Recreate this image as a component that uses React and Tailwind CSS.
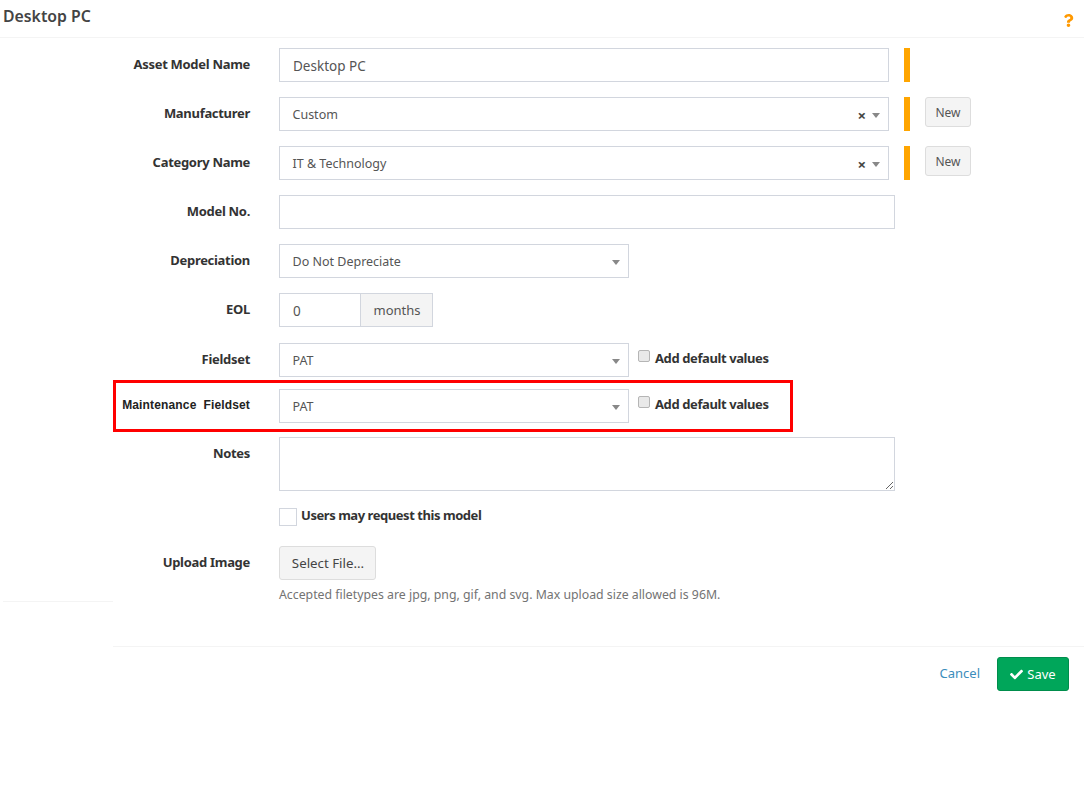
// Asset model edit form: flow layout with a red annotation box over the maintenance row.
import { FaCheck, FaQuestion } from 'react-icons/fa';

const field = 'h-[34px] border border-[#d2d6de] bg-white px-[13px] pt-[2px] text-[13.5px] text-[#555] outline-none';
const boldText = 'text-[13px] font-bold tracking-[-0.3px] text-[#333]';

function Row({ label, children, labelClass = boldText, gap = 'mb-[15px]' }) {
  return (
    <div className={`flex items-start ${gap}`}>
      <label className={`w-[137px] shrink-0 whitespace-nowrap pt-[6px] text-right leading-5 ${labelClass}`}>
        {label}
      </label>
      <div className="ml-[29px] flex min-w-0 items-start">{children}</div>
    </div>
  );
}

function Caret() {
  return <span className="h-0 w-0 border-x-[4px] border-t-[5px] border-x-transparent border-t-[#888]" />;
}

function Select({ value, width, clearable }) {
  return (
    <div className={`${field} ${width} flex items-center justify-between !pl-[12.5px] !pr-[8px] !text-[12.5px]`}>
      <span>{value}</span>
      <span className="flex items-center gap-[6px]">
        {clearable && <span className="text-[15px] font-bold leading-none text-[#444]">×</span>}
        <Caret />
      </span>
    </div>
  );
}

function RequiredBar() {
  return <span className="ml-[15px] h-[34px] w-[6px] bg-[#ffa500]" />;
}

function NewButton() {
  return (
    <button className="ml-[15px] h-[30px] w-[46px] rounded-[3px] border border-[#ddd] bg-[#f4f4f4] pt-[2px] text-[12px] text-[#555]">
      New
    </button>
  );
}

function DefaultValues() {
  return (
    <label className={`ml-[9px] flex h-[32px] items-center whitespace-nowrap ${boldText} !tracking-[-0.4px]`}>
      <input type="checkbox" className="mb-[6px] mr-[5px] h-[12px] w-[12px] appearance-none rounded-[2px] border border-[#b5b5b5] bg-[#e9e9e9]" />
      Add default values
    </label>
  );
}

export default function App() {
  return (
    <div className="min-h-[800px] bg-white font-['Noto_Sans','Open_Sans',sans-serif] text-[#333]">
      <header className="flex h-[38px] items-center justify-between border-b border-[#f4f4f4] pl-[3px] pr-[9px]">
        <h1 className="mb-[3px] text-[15.8px] font-semibold text-[#444]">Desktop PC</h1>
        <FaQuestion className="mt-[3px] text-[13px] text-[#ff9900]" />
      </header>

      <div className="flex">
        <div className="ml-[3px] h-[564px] w-[110px] shrink-0 border-b border-[#f4f4f4]" />

        <div className="min-w-0 flex-1">
          <form className="relative h-[609px] border-b border-[#f4f4f4] pt-[10px]">
            <Row label="Asset Model Name">
              <input readOnly value="Desktop PC" className={`${field} w-[610px]`} />
              <RequiredBar />
            </Row>
            <Row label="Manufacturer">
              <Select value="Custom" width="w-[610px]" clearable />
              <RequiredBar />
              <NewButton />
            </Row>
            <Row label="Category Name">
              <Select value="IT & Technology" width="w-[610px]" clearable />
              <RequiredBar />
              <NewButton />
            </Row>
            <Row label="Model No.">
              <input readOnly className={`${field} w-[616px]`} />
            </Row>
            <Row label="Depreciation">
              <Select value="Do Not Depreciate" width="w-[350px]" />
            </Row>
            <Row label="EOL" gap="mb-[16px]">
              <input readOnly value="0" className={`${field} w-[82px]`} />
              <span className="flex h-[34px] w-[72px] items-center justify-center border border-l-0 border-[#d2d6de] bg-[#f4f4f4] pl-[1px] pt-[2px] text-[13px] text-[#555]">
                months
              </span>
            </Row>
            <Row label="Fieldset" gap="mb-[12px]">
              <Select value="PAT" width="w-[350px]" />
              <DefaultValues />
            </Row>
            <Row
              label={'Maintenance\u00a0 Fieldset'}
              labelClass="font-['Liberation_Sans'] text-[12px] font-bold tracking-[0.15px] text-[#222]"
              gap="mb-[14px]"
            >
              <Select value="PAT" width="w-[350px]" />
              <DefaultValues />
            </Row>
            <Row label="Notes" gap="mb-[17px]">
              <textarea readOnly className="block h-[54px] w-[616px] border border-[#d2d6de] bg-white outline-none" />
            </Row>
            <div className="mb-[20px] ml-[166px] flex items-start">
              <input type="checkbox" className="h-[18px] w-[18px] appearance-none border border-[#d2d6de] bg-white" />
              <span className="ml-[4px] text-[13px] font-bold leading-[15px] tracking-[-0.45px] text-[#333]">
                Users may request this model
              </span>
            </div>
            <Row label="Upload Image" gap="mb-[5px]">
              <button type="button" className="h-[34px] w-[97px] rounded-[3px] border border-[#ddd] bg-[#f4f4f4] pl-[1px] pt-[2px] text-[13.3px] text-[#444]">
                Select File...
              </button>
            </Row>
            <p className="ml-[166px] text-[12.3px] leading-5 text-[#737373]">
              Accepted filetypes are jpg, png, gif, and svg. Max upload size allowed is 96M.
            </p>

            {/* annotation drawn on the screenshot */}
            <div className="pointer-events-none absolute left-0 top-[342px] h-[52px] w-[680px] border-[3px] border-[#ff0000]" />
          </form>

          <div className="flex items-center justify-end gap-[17px] pr-[15px] pt-[10px]">
            <a className="text-[13px] text-[#3c8dbc]">Cancel</a>
            <button className="flex h-[34px] w-[72px] items-center justify-center gap-[4px] rounded-[3px] border border-[#008d4c] bg-[#00a65a] pt-[1px] text-[13px] text-white">
              <FaCheck className="text-[13px]" />
              Save
            </button>
          </div>
        </div>
      </div>
    </div>
  );
}
